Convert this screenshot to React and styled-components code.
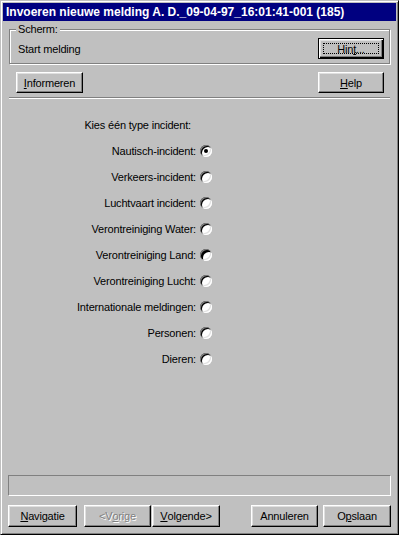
import React from "react";
import styled, { createGlobalStyle, css } from "styled-components";

const Global = createGlobalStyle`
  html, body { margin: 0; padding: 0; background: #c0c0c0; }
  body { font-family: "Liberation Sans", Arial, sans-serif; }
  * { box-sizing: border-box; }
`;

const Window = styled.div`
  width: 399px;
  height: 535px;
  background: #c0c0c0;
  border: 1px solid;
  border-color: #c0c0c0 #000 #000 #c0c0c0;
  box-shadow: inset 1px 1px #fff, inset -1px -1px #808080;
  padding: 2px;
  display: flex;
  flex-direction: column;
  font: 11px "Liberation Sans", Arial, sans-serif;
  letter-spacing: -0.18px;
  color: #000;
`;

const TitleBar = styled.div`
  height: 18px;
  flex: none;
  background: #000080;
  color: #fff;
  font: bold 12px "Liberation Sans", Arial, sans-serif;
  letter-spacing: 0;
  display: flex;
  align-items: center;
  padding-left: 3px;
  white-space: nowrap;
`;

const Body = styled.div`
  flex: 1;
  display: flex;
  flex-direction: column;
  padding: 0 5px 5px;
`;

const GroupBox = styled.div`
  position: relative;
  margin: 8px 1px 0;
  height: 35px;
  border: 1px solid #808080;
  box-shadow: 1px 1px 0 #fff, inset 1px 1px 0 #fff;
  padding: 8px 5px 4px 8px;
  display: flex;
  align-items: center;
  justify-content: space-between;
`;

const Legend = styled.span`
  position: absolute;
  top: -7px;
  left: 6px;
  padding: 0 2px;
  line-height: 13px;
  background: #c0c0c0;
`;

const bevel = css`
  background: #c0c0c0;
  border: 1px solid;
  border-color: #fff #000 #000 #fff;
  box-shadow: inset -1px -1px #808080, inset 1px 1px #dfdfdf;
`;

const Button = styled.button`
  ${bevel};
  position: relative;
  width: ${(p) => p.$w}px;
  height: ${(p) => p.$h || 21}px;
  flex: none;
  padding: 0;
  margin: 0;
  font: inherit;
  letter-spacing: inherit;
  color: ${(p) => (p.disabled ? "#808080" : "#000")};
  text-shadow: ${(p) => (p.disabled ? "1px 1px 0 #fff" : "none")};
  display: flex;
  align-items: center;
  justify-content: center;
  cursor: default;
  ${(p) =>
    p.$default &&
    css`
      border: 1px solid #000;
      box-shadow: inset 1px 1px #fff, inset -1px -1px #000,
        inset -2px -2px #808080, inset 2px 2px #dfdfdf;
      &::after {
        content: "";
        position: absolute;
        left: 4px;
        top: 4px;
        right: 4px;
        bottom: 4px;
        border: 1px dotted #000;
      }
    `}
`;

const TopRow = styled.div`
  margin-top: 8px;
  padding: 0 7px 0 8px;
  display: flex;
  justify-content: space-between;
`;

const Separator = styled.div`
  margin: 4px 1px 0;
  border-top: 1px solid #808080;
  border-bottom: 1px solid #fff;
`;

const Choices = styled.div`
  display: grid;
  grid-template-columns: 188px 12px;
  column-gap: 4px;
  grid-auto-rows: 26px;
  align-items: center;
  padding-top: 13px;
`;

const Heading = styled.div`
  grid-column: 1;
  text-align: right;
  padding-right: 5px;
  white-space: nowrap;
`;

const Spacer = styled.div``;

const Label = styled.label`
  text-align: right;
  white-space: nowrap;
`;

const Radio = styled.span`
  position: relative;
  width: 12px;
  height: 12px;
  border-radius: 50%;
  background: #fff;
  box-shadow: inset 1px 1px #808080, inset -1px -1px #fff,
    inset ${(p) => (p.$pressed ? "3px 3px" : "2px 2px")} #000,
    inset -2px -2px #dfdfdf;
  ${(p) =>
    p.$checked &&
    css`
      &::after {
        content: "";
        position: absolute;
        left: 4px;
        top: 4px;
        width: 4px;
        height: 4px;
        border-radius: 50%;
        background: #000;
      }
    `}
`;

const StatusPanel = styled.div`
  margin-top: auto;
  height: 21px;
  border: 1px solid;
  border-color: #808080 #fff #fff #808080;
`;

const Footer = styled.div`
  margin-top: 9px;
  display: flex;
  align-items: center;
`;

const ButtonGroup = styled.div`
  display: flex;
  gap: ${(p) => p.$gap || 0}px;
  margin-left: ${(p) => (p.$push ? "auto" : `${p.$ml || 0}px`)};
`;

const choices = [
  { label: "Nautisch-incident:", checked: true },
  { label: "Verkeers-incident:" },
  { label: "Luchtvaart incident:" },
  { label: "Verontreiniging Water:" },
  { label: "Verontreiniging Land:", pressed: true },
  { label: "Verontreiniging Lucht:" },
  { label: "Internationale meldingen:" },
  { label: "Personen:" },
  { label: "Dieren:" },
];

export default function App() {
  return (
    <>
      <Global />
      <Window>
        <TitleBar>Invoeren nieuwe melding A. D._09-04-97_16:01:41-001 (185)</TitleBar>
        <Body>
          <GroupBox>
            <Legend>Scherm:</Legend>
            <span>Start melding</span>
            <Button $w={66} $default>
              Hin<u>t</u>...
            </Button>
          </GroupBox>
          <TopRow>
            <Button $w={67}>
              <u>I</u>nformeren
            </Button>
            <Button $w={66}>
              <u>H</u>elp
            </Button>
          </TopRow>
          <Separator />
          <Choices>
            <Heading>Kies één type incident:</Heading>
            <Spacer />
            {choices.map((c) => (
              <React.Fragment key={c.label}>
                <Label>{c.label}</Label>
                <Radio $checked={c.checked} $pressed={c.pressed} />
              </React.Fragment>
            ))}
          </Choices>
          <StatusPanel />
          <Footer>
            <Button $w={69} $h={22}>
              <u>N</u>avigatie
            </Button>
            <ButtonGroup $gap={1} $ml={7}>
              <Button $w={67} $h={22} disabled>
                &lt;V<u>o</u>rige
              </Button>
              <Button $w={68} $h={22}>
                <u>V</u>olgende&gt;
              </Button>
            </ButtonGroup>
            <ButtonGroup $gap={5} $push>
              <Button $w={67} $h={22}>Annuleren</Button>
              <Button $w={68} $h={22}>
                O<u>p</u>slaan
              </Button>
            </ButtonGroup>
          </Footer>
        </Body>
      </Window>
    </>
  );
}
